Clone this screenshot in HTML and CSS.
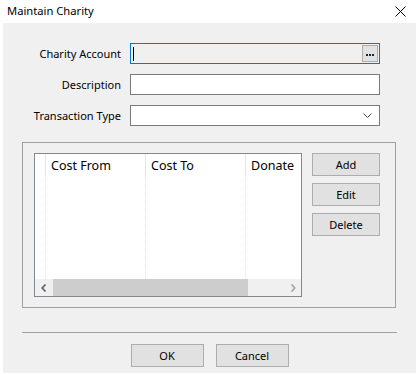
FILE: index.html
```html
<!DOCTYPE html>
<html lang="en">
<head>
  <meta charset="UTF-8" />
  <title>Maintain Charity</title>
  <link rel="stylesheet" href="styles.css">
</head>
<body>
  <div class="window">
    <div class="titlebar">
      <span class="title">Maintain Charity</span>
      <svg class="close" width="11" height="11" viewBox="0 0 11 11">
        <path d="M0.5 0.5 L10.5 10.5 M10.5 0.5 L0.5 10.5" stroke="#000" stroke-width="1" fill="none"/>
      </svg>
    </div>

    <div class="dialog">
      <div class="fields">
        <label class="field-label">Charity Account</label>
        <div class="input input-focus">
          <span class="caret"></span>
          <span class="browse"><i></i><i></i><i></i></span>
        </div>

        <label class="field-label">Description</label>
        <div class="input"></div>

        <label class="field-label">Transaction Type</label>
        <div class="input combo">
          <svg class="chevron" width="9" height="5" viewBox="0 0 9 5">
            <polyline points="0.5,0.5 4.5,4.5 8.5,0.5" stroke="#444" stroke-width="1" fill="none"/>
          </svg>
        </div>
      </div>

      <div class="group">
        <div class="listview">
          <div class="lv-cols">
            <div class="col col-first">
              <div class="col-head"></div>
              <div class="col-body"></div>
            </div>
            <div class="col">
              <div class="col-head">Cost From</div>
              <div class="col-body"></div>
            </div>
            <div class="col">
              <div class="col-head">Cost To</div>
              <div class="col-body"></div>
            </div>
            <div class="col">
              <div class="col-head">Donate</div>
              <div class="col-body"></div>
            </div>
          </div>
          <div class="hscroll">
            <span class="arrow">
              <svg width="6" height="8" viewBox="0 0 6 8">
                <polyline points="4.5,0.5 1.2,4 4.5,7.5" stroke="#606060" stroke-width="1.6" fill="none"/>
              </svg>
            </span>
            <span class="track"><span class="thumb"></span></span>
            <span class="arrow">
              <svg width="6" height="8" viewBox="0 0 6 8">
                <polyline points="1.5,0.5 4.8,4 1.5,7.5" stroke="#a3a3a3" stroke-width="1.6" fill="none"/>
              </svg>
            </span>
          </div>
        </div>
        <div class="side-buttons">
          <button class="btn">Add</button>
          <button class="btn">Edit</button>
          <button class="btn">Delete</button>
        </div>
      </div>

      <div class="separator"></div>

      <div class="footer">
        <button class="btn btn-wide">OK</button>
        <button class="btn btn-wide">Cancel</button>
      </div>
    </div>
  </div>
</body>
</html>
```

FILE: styles.css
```css
body {
  margin: 0;
  background: #fff;
  font-family: "Noto Sans", "Open Sans", sans-serif;
  font-size: 11px;
  color: #000;
}

.window {
  width: 420px;
  height: 374px;
  display: flex;
  flex-direction: column;
}

.titlebar {
  height: 23px;
  display: flex;
  align-items: center;
  justify-content: space-between;
  padding: 0 14px 2px 7px;
  box-sizing: border-box;
}

.title {
  font-size: 11.2px;
  line-height: 14px;
}

.close {
  display: block;
  margin-top: 2px;
}

.dialog {
  flex: 1;
  margin: 0 4px 1px 3px;
  background: #f0f0f0;
  display: flex;
  flex-direction: column;
  padding-top: 20px;
}

.fields {
  display: grid;
  grid-template-columns: 111px 250px;
  column-gap: 16px;
  row-gap: 10px;
}

.field-label {
  text-align: right;
  align-self: center;
  line-height: 14px;
  margin-right: -7px;
}

.input {
  height: 21px;
  box-sizing: border-box;
  border: 1px solid #7a7a7a;
  background: #fff;
  display: flex;
  align-items: center;
}

.input-focus {
  border-color: #0078d7;
  background: #f0f0f0;
}

.caret {
  width: 1px;
  height: 14px;
  background: #000;
  margin-left: 2px;
}

.browse {
  margin-left: auto;
  margin-right: 1px;
  width: 16px;
  height: 17px;
  box-sizing: border-box;
  border: 1px solid #adadad;
  background: #e1e1e1;
  display: flex;
  align-items: center;
  justify-content: center;
  gap: 1px;
  padding-top: 2px;
}

.browse i {
  width: 2px;
  height: 2px;
  background: #222;
}

.combo {
  justify-content: flex-end;
}

.chevron {
  display: block;
  margin-right: 7px;
}

.group {
  margin: 16px 20px 0 19px;
  border: 1px solid #a0a0a0;
  padding: 10px 11px;
  display: flex;
  gap: 10px;
}

.listview {
  width: 268px;
  height: 144px;
  box-sizing: border-box;
  border: 1px solid #828790;
  background: #fff;
  display: flex;
  flex-direction: column;
  overflow: hidden;
}

.lv-cols {
  flex: 1;
  display: flex;
  overflow: hidden;
}

.col {
  width: 100px;
  flex: none;
  display: flex;
  flex-direction: column;
}

.col-first {
  width: 11px;
}

.col-head {
  height: 22px;
  box-sizing: border-box;
  padding: 2px 0 0 5px;
  line-height: 20px;
  border-right: 1px solid #e5e5e5;
  white-space: nowrap;
  font-size: 12.5px;
}

.col-body {
  flex: 1;
  border-right: 1px dotted #e3e3e3;
}

.hscroll {
  height: 17px;
  display: flex;
  background: #f0f0f0;
}

.arrow {
  width: 17px;
  flex: none;
  display: flex;
  align-items: center;
  justify-content: center;
}

.track {
  flex: 1;
  padding: 0 36px 0 1px;
  display: flex;
}

.thumb {
  flex: 1;
  background: #cdcdcd;
}

.side-buttons {
  display: flex;
  flex-direction: column;
  gap: 7px;
}

.btn {
  width: 68px;
  height: 23px;
  border: 1px solid #adadad;
  background: #e1e1e1;
  font-family: inherit;
  font-size: 11px;
  color: #000;
  padding: 0;
}

.btn-wide {
  width: 73px;
}

.separator {
  height: 1px;
  background: #a0a0a0;
  margin: 24px 19px 0 19px;
}

.footer {
  display: flex;
  justify-content: center;
  gap: 12px;
  margin-top: 11px;
}
```
